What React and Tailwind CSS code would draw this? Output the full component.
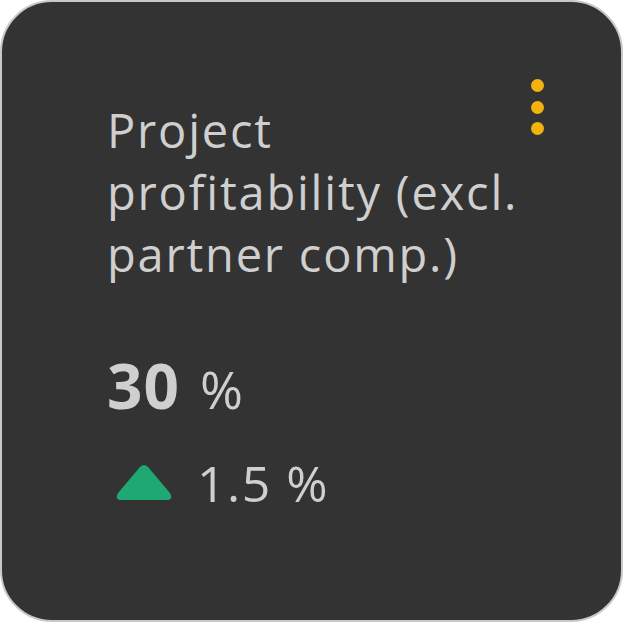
export default function App() {
  return (
    <div className="w-[623px] h-[622px] bg-white" style={{ fontFamily: "'Open Sans', 'Noto Sans', sans-serif" }}>
      <div className="relative w-full h-full rounded-[52px] border-2 border-[#c8c8c8] bg-[#333333] pl-[105px] pt-[97px]">
        <div className="absolute right-[77px] top-[77px] flex flex-col gap-[8.5px]">
          <span className="block w-[13px] h-[13px] rounded-full bg-[#f4b20f]" />
          <span className="block w-[13px] h-[13px] rounded-full bg-[#f4b20f]" />
          <span className="block w-[13px] h-[13px] rounded-full bg-[#f4b20f]" />
        </div>
        <h2 className="text-[47px] leading-[62px] tracking-[1.8px] text-[#cfcfcf] whitespace-nowrap">
          Project
          <br />
          profitability (excl.
          <br />
          partner comp.)
        </h2>
        <div className="mt-[69px] flex items-baseline gap-[20px] text-[#cfcfcf]">
          <span className="text-[62px] font-bold leading-none tracking-[1px]">30</span>
          <span className="text-[52px] leading-none">%</span>
        </div>
        <div className="mt-[42px] flex items-end gap-[24px] pl-[8px] text-[#cfcfcf]">
          <svg width="58" height="38" viewBox="0 0 58 38" className="mb-[6px]">
            <path d="M25 3 Q29 -1 33 3 L55 29 Q59 36 51 36 L7 36 Q-1 36 3 29 Z" fill="#1ea874" />
          </svg>
          <span className="text-[50px] leading-none tracking-[1.5px]">1.5 %</span>
        </div>
      </div>
    </div>
  );
}
